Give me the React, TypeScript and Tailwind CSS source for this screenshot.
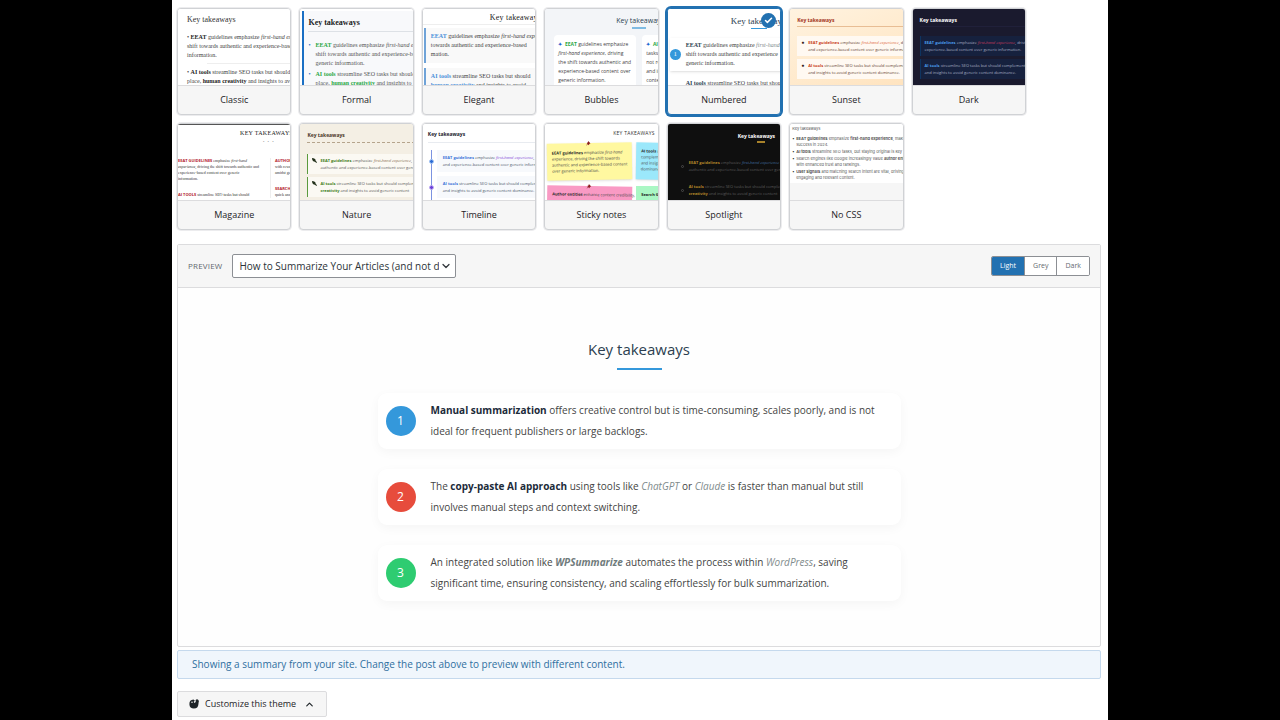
import { useState } from 'react';
import type { ReactNode } from 'react';
import { Check, ChevronDown, ChevronUp } from 'lucide-react';

type Theme = { name: string; thumb: ReactNode };

const serif = "font-['Liberation_Serif',serif]";

function Classic() {
  return (
    <div className={`${serif} h-full w-[180px] bg-white pt-1.5 pl-[9px] text-[6px] leading-[9px] text-[#444]`}>
      <div className="text-[8px] leading-[9px] text-[#333]">Key takeaways</div>
      <div className="mt-[9px]">
        • <b className="text-[#222]">EEAT</b> guidelines emphasize <i>first-hand experience</i>,
        <br />
        shift towards authentic and experience-based
        <br />
        information.
      </div>
      <div className="mt-[3px] ml-5 border-t border-[#eee] pt-[4px]">
        <div className="-ml-5">
          • <b className="text-[#222]">AI tools</b> streamline SEO tasks but should
          <br />
          place, <b className="text-[#222]">human creativity</b> and insights to avoid
        </div>
      </div>
    </div>
  );
}

function Formal() {
  return (
    <div className="h-full w-[180px] bg-white pt-0.5 pl-0.5">
      <div
        className={`${serif} h-full border-l-2 border-[#1a6fc4] bg-[#f8f9fb] pt-[7px] pl-1 text-[6px] leading-[9px] text-[#555]`}
      >
        <div className="border-b border-[#dde1e6] pb-[4px] text-[8px] leading-[9px] font-bold text-[#222]">
          Key takeaways
        </div>
        <div className="mt-[9px] flex gap-[5px]">
          <span className="text-[#1a6fc4]">•</span>
          <div>
            <b className="text-[#28a745]">EEAT</b> guidelines emphasize <i>first-hand experience</i>
            <br />
            shift towards authentic and experience-based
            <br />
            generic information.
          </div>
        </div>
        <div className="mt-[2px] flex gap-[5px]">
          <span className="text-[#1a6fc4]">•</span>
          <div>
            <b className="text-[#28a745]">AI tools</b> streamline SEO tasks but should
            <br />
            place, <b className="text-[#28a745]">human creativity</b> and insights to
          </div>
        </div>
      </div>
    </div>
  );
}

function Elegant() {
  return (
    <div className={`${serif} h-full w-[180px] bg-white pt-1 text-[6px] leading-[9px] text-[#444]`}>
      <div className="border-b border-[#eee] pb-[2px] pl-[67px] text-[8px] leading-[9px] tracking-wide text-[#222]">
        Key takeaways
      </div>
      <div className="mt-[3px] ml-[1px] border-l-2 border-[#6fa3d8] bg-[#f9f9f9] py-[4px] pl-[5px]">
        <b className="text-[#4a90d9]">EEAT</b> guidelines emphasize <i>first-hand experience</i>
        <br />
        towards authentic and experience-based
        <br />
        mation.
      </div>
      <div className="mt-[5px] ml-[1px] border-l-2 border-[#6fa3d8] bg-[#f9f9f9] py-[4px] pl-[5px]">
        <b className="text-[#4a90d9]">AI tools</b> streamline SEO tasks but should
        <br />
        <b className="text-[#4a90d9]">human creativity</b> and insights to avoid
      </div>
    </div>
  );
}

function Bubbles() {
  return (
    <div className="h-full w-[190px] bg-[#f3f5f8] pt-[7px] text-[5px] leading-[9px] text-[#444]">
      <div className="pl-[71px] text-[7px] leading-[9px] text-[#2c3e50]">Key takeaways</div>
      <div className="mt-[2px] ml-[87px] h-0.5 w-[14px] bg-[#7fbbe3]" />
      <div className="mt-[6px] ml-[9px] flex gap-[6px]">
        <div className="w-[82px] rounded-sm bg-white px-1 py-[5px]">
          <b className="text-[#1a5fd0]">✦</b>&nbsp; <b className="text-[#28a745]">EEAT</b> guidelines emphasize
          <br />
          <i>first-hand experience</i>, driving
          <br />
          the shift towards authentic and
          <br />
          experience-based content over
          <br />
          generic information.
        </div>
        <div className="w-[82px] rounded-sm bg-white px-1 py-[5px]">
          <b className="text-[#1a5fd0]">✦</b>&nbsp; <b className="text-[#28a745]">AI tools</b>
          <br />
          tasks but should
          <br />
          not replace
          <br />
          and insights
          <br />
          content
        </div>
      </div>
    </div>
  );
}

function Numbered() {
  return (
    <div className={`${serif} h-full w-[180px] bg-white pt-[7px] text-[6px] leading-[9px] text-[#444]`}>
      <div className="pl-[63px] text-[9px] leading-[10px] text-[#2c3e50]">Key takeaways</div>
      <div className="mt-[2px] ml-[83px] h-px w-4 bg-[#3498db]" />
      <div className="mt-[9px] ml-[2px] flex items-center gap-[5px] py-[3px] shadow-sm">
        <span className="size-[11px] rounded-full bg-[#3498db] text-center text-[6px] leading-[11px] text-white">
          1
        </span>
        <div>
          <b className="text-[#2c3e50]">EEAT</b> guidelines emphasize <i className="text-[#7f8c8d]">first-hand</i>
          <br />
          shift towards authentic and experience
          <br />
          generic information.
        </div>
      </div>
      <div className="mt-[8px] pl-[18px]">
        <b className="text-[#2c3e50]">AI tools</b> streamline SEO tasks but should
      </div>
    </div>
  );
}

function Sunset() {
  return (
    <div className="h-full w-[180px] bg-linear-to-br from-[#fff3e0] to-[#ffe0b8] pt-[7px] pl-[7px] text-[4px] leading-[7px] text-[#5d3a2e]">
      <div className="border-b border-[#e8bd94] pb-[2px] text-[5px] leading-[8px] font-bold text-[#a3341a]">
        Key takeaways
      </div>
      <div className="mt-[9px] flex gap-1 bg-[#fff9f2] px-1 py-[3px]">
        <span className="text-[5px] text-[#331a14]">●</span>
        <div>
          <b className="text-[#c8401a]">EEAT guidelines</b> emphasize{' '}
          <i className="text-[#e0693a]">first-hand experience</i>, driving
          <br />
          and experience-based content over generic information.
        </div>
      </div>
      <div className="mt-[3px] flex gap-1 bg-[#fff9f2] px-1 py-[3px]">
        <span className="text-[5px] text-[#331a14]">●</span>
        <div>
          <b className="text-[#c8401a]">AI tools</b> streamline SEO tasks but should complement
          <br />
          and insights to avoid generic content dominance.
        </div>
      </div>
    </div>
  );
}

function DarkThumb() {
  return (
    <div className="h-full w-[180px] bg-[#1a1a2e] pt-[7px] pl-[7px] text-[4px] leading-[7px] text-[#a9b0c4]">
      <div className="border-b border-[#20203a] pb-[2px] text-[5px] leading-[8px] font-bold text-white">
        Key takeaways
      </div>
      <div className="mt-[9px] border-l border-[#0f3460] bg-[#16213e] py-[3px] pl-1">
        <b className="text-[#4a9be8]">EEAT guidelines</b> emphasize{' '}
        <i className="text-[#c23a5c]">first-hand experience</i>, driving
        <br />
        experience-based content over generic information.
      </div>
      <div className="mt-[3px] border-l border-[#0f3460] bg-[#16213e] py-[3px] pl-1">
        <b className="text-[#4a9be8]">AI tools</b> streamline SEO tasks but should complement,
        <br />
        and insights to avoid generic content dominance.
      </div>
    </div>
  );
}

function Magazine() {
  return (
    <div
      className={`${serif} h-full w-[180px] border-t border-[#555] bg-white pt-1 text-[4px] leading-[6px] text-[#333]`}
    >
      <div className="pl-[62px] text-[6px] leading-[8px] tracking-wider text-[#222] uppercase">Key takeaways</div>
      <div className="mt-[2px] pl-[85px] text-[4px] tracking-widest text-[#999]">•&nbsp; •&nbsp; •</div>
      <div className="mt-[13px] flex gap-1">
        <div className="w-[93px] border-r border-[#eee]">
          <b className="font-['Open_Sans',sans-serif] text-[#b3202c]">EEAT GUIDELINES</b> emphasize <i>first-hand</i>
          <br />
          <i>experience</i>, driving the shift towards authentic and
          <br />
          experience-based content over generic
          <br />
          information.
          <div className="mt-[10px]">
            <b className="font-['Open_Sans',sans-serif] text-[#b3202c]">AI TOOLS</b> streamline SEO tasks but should
          </div>
        </div>
        <div>
          <b className="font-['Open_Sans',sans-serif] text-[#b3202c]">AUTHOR ENTITIES</b>
          <br />
          with rewards
          <br />
          amidst generic
          <div className="mt-[10px]">
            <b className="font-['Open_Sans',sans-serif] text-[#b3202c]">SEARCH GOOGLE</b>
            <br />
            quick answers
          </div>
        </div>
      </div>
    </div>
  );
}

function Leaf() {
  return (
    <svg viewBox="0 0 6 6" className="mt-px size-[5px] shrink-0" fill="#22301a">
      <path d="M0 0C2.4 0 4.6 1.2 4.4 3.4L6 5.2 5.2 6 3.6 4.6C1.4 4.6 0 2.4 0 0Z" />
    </svg>
  );
}

function Nature() {
  return (
    <div className="h-full w-[180px] bg-[#f4efe4] pt-[7px] pl-[7px] text-[4px] leading-[7px] text-[#555]">
      <div className="border-b border-dashed border-[#b5a48c] pb-[3px] text-[5px] leading-[8px] font-bold text-[#4a3728]">
        Key takeaways
      </div>
      <div className="mt-[11px] flex gap-[3px] border-l border-[#5a9a3c] bg-[#fbf9f3] py-[3px] pl-1">
        <Leaf />
        <div>
          <b className="text-[#3f7d20]">EEAT guidelines</b> emphasize{' '}
          <i className="text-[#8b7355]">first-hand experience</i>,
          <br />
          authentic and experience-based content over generic
        </div>
      </div>
      <div className="mt-[3px] flex gap-[3px] border-l border-[#5a9a3c] bg-[#fbf9f3] py-[3px] pl-1">
        <Leaf />
        <div>
          <b className="text-[#3f7d20]">AI tools</b> streamline SEO tasks but should complement
          <br />
          <b className="text-[#3f7d20]">creativity</b> and insights to avoid generic content
        </div>
      </div>
    </div>
  );
}

function TimelineDot({ className }: { className: string }) {
  return <span className={`-ml-[3px] size-[5px] shrink-0 rounded-full border ${className}`} />;
}

function Timeline() {
  return (
    <div className="h-full w-[180px] bg-white pt-[6px] pl-[5px] text-[4px] leading-[7px] text-[#4a5568]">
      <div className="border-b border-[#e8ebf0] pb-1 text-[5px] leading-[8px] font-bold text-[#1a202c]">
        Key takeaways
      </div>
      <div className="mt-[7px] ml-[3px] flex flex-col gap-1 border-l border-[#7c93e0] pb-4">
        <div className="flex items-center gap-[3px]">
          <TimelineDot className="border-[#a9c8f5] bg-[#2b6cd4]" />
          <div className="grow bg-[#f7f9fc] py-1 pl-[6px]">
            <b className="text-[#3b74d8]">EEAT guidelines</b> emphasize{' '}
            <i className="text-[#8a4fd8]">first-hand experience</i>, driving
            <br />
            and experience-based content over generic information.
          </div>
        </div>
        <div className="flex items-center gap-[3px]">
          <TimelineDot className="border-[#c3b0f5] bg-[#6a3fd8]" />
          <div className="grow bg-[#f7f9fc] py-1 pl-[6px]">
            <b className="text-[#3b74d8]">AI tools</b> streamline SEO tasks but should complement
            <br />
            and insights to avoid generic content dominance.
          </div>
        </div>
      </div>
    </div>
  );
}

function Pin() {
  return (
    <svg viewBox="0 0 6 6" className="absolute -top-0.5 left-[39px] size-[5px]">
      <path d="M3 0 6 3 4.6 3.4 3.6 5 2.4 3.8 0 6 2 3.4 1.2 2.4 2.8 1.6Z" fill="#8a1f1f" />
    </svg>
  );
}

function StickyNotes() {
  return (
    <div className="h-full w-[180px] bg-white pt-[5px] text-[4px] leading-[6px] text-[#444]">
      <div className="pl-[68px] text-[5px] leading-[8px] tracking-wider text-[#333] uppercase">Key takeaways</div>
      <div className="mt-[6px] ml-[2px] grid grid-cols-[85px_85px] gap-x-1 gap-y-[6px]">
        <div className="relative h-[37px] -rotate-1 bg-[#fff8a0] px-[5px] pt-[7px] shadow-sm">
          <Pin />
          <b className="text-[#222]">EEAT guidelines</b> emphasize <i>first-hand</i>
          <br />
          experience, driving the shift towards
          <br />
          authentic and experience-based content
          <br />
          over generic information.
        </div>
        <div className="h-[37px] rotate-1 bg-[#9be8fb] px-[5px] pt-[6px] shadow-sm">
          <b className="text-[#222]">AI tools</b> streamline
          <br />
          complement,
          <br />
          and insights
          <br />
          dominance.
        </div>
        <div className="relative h-[37px] rotate-1 bg-[#f99ac4] px-[5px] pt-[6px]">
          <Pin />
          <b className="text-[#222]">Author entities</b> enhance content credibility,
        </div>
        <div className="h-[37px] bg-[#aaf7c4] px-[5px] pt-[6px]">
          <b className="text-[#222]">Search Google</b>
        </div>
      </div>
    </div>
  );
}

function Spotlight() {
  return (
    <div className="h-full w-[180px] bg-[#0f0f0f] pt-[8px] text-[4px] leading-[7px] text-[#5c5c5c]">
      <div className="pl-[70px] text-[5px] leading-[8px] font-bold text-white">Key takeaways</div>
      <div className="mt-[1px] ml-[89px] h-0.5 w-2 bg-[#a8822a]" />
      <div className="mt-4 flex items-center gap-[5px] pl-[13px]">
        <span className="size-[3px] rounded-full border border-[#4a4a4a]" />
        <div>
          <b className="text-[#b3872a]">EEAT guidelines</b> emphasize{' '}
          <i className="text-[#3f6a9c]">first-hand experience</i>
          <br />
          authentic and experience-based content over generic
        </div>
      </div>
      <div className="mt-[10px] flex items-center gap-[5px] pl-[13px]">
        <span className="size-[3px] rounded-full border border-[#4a4a4a]" />
        <div>
          <b className="text-[#b3872a]">AI tools</b> streamline SEO tasks but should complement
          <br />
          <b className="text-[#b3872a]">creativity</b> and insights to avoid generic content
        </div>
      </div>
    </div>
  );
}

function NoCssItem({ children }: { children: ReactNode }) {
  return (
    <li className="flex gap-0.5">
      <span className="w-0.5 shrink-0 text-[#222]">•</span>
      <span>{children}</span>
    </li>
  );
}

function NoCss() {
  return (
    <div className="w-[180px] bg-white pt-px pb-[2px] pl-[2px] font-['Inter',sans-serif] text-[4px] leading-[6px] text-[#555]">
      <div className="leading-[7px]">Key takeaways</div>
      <ul className="mt-1 flex flex-col gap-px">
        <NoCssItem>
          <b>EEAT guidelines</b> emphasize <b>first-hand experience</b>, making
          <br />
          success in 2024.
        </NoCssItem>
        <NoCssItem>
          <b>AI tools</b> streamline SEO tasks, but staying original is key
        </NoCssItem>
        <NoCssItem>
          Search engines like Google increasingly value <b>author entities</b>
          <br />
          with enhanced trust and rankings.
        </NoCssItem>
        <NoCssItem>
          <b>User signals</b> and matching search intent are vital, driving
          <br />
          engaging and relevant content.
        </NoCssItem>
      </ul>
    </div>
  );
}

const themes: Theme[] = [
  { name: 'Classic', thumb: <Classic /> },
  { name: 'Formal', thumb: <Formal /> },
  { name: 'Elegant', thumb: <Elegant /> },
  { name: 'Bubbles', thumb: <Bubbles /> },
  { name: 'Numbered', thumb: <Numbered /> },
  { name: 'Sunset', thumb: <Sunset /> },
  { name: 'Dark', thumb: <DarkThumb /> },
  { name: 'Magazine', thumb: <Magazine /> },
  { name: 'Nature', thumb: <Nature /> },
  { name: 'Timeline', thumb: <Timeline /> },
  { name: 'Sticky notes', thumb: <StickyNotes /> },
  { name: 'Spotlight', thumb: <Spotlight /> },
  { name: 'No CSS', thumb: <NoCss /> },
];

const takeaways = [
  {
    color: 'bg-[#3498db]',
    text: (
      <>
        <b className="text-[#1c2b3a]">Manual summarization</b> offers creative control but is time-consuming, scales
        poorly, and is not ideal for frequent publishers or large backlogs.
      </>
    ),
  },
  {
    color: 'bg-[#e74c3c]',
    text: (
      <>
        The <b className="text-[#1c2b3a]">copy-paste AI approach</b> using tools like{' '}
        <i className="text-[#7f8c8d]">ChatGPT</i> or <i className="text-[#7f8c8d]">Claude</i> is faster than manual but
        still involves manual steps and context switching.
      </>
    ),
  },
  {
    color: 'bg-[#2ecc71]',
    text: (
      <>
        An integrated solution like <b className="text-[#6f7b7c] italic">WPSummarize</b> automates the process within{' '}
        <i className="text-[#7f8c8d]">WordPress</i>, saving significant time, ensuring consistency, and scaling
        effortlessly for bulk summarization.
      </>
    ),
  },
];

const modes = ['Light', 'Grey', 'Dark'];

function ThemeCard({ theme, selected, onSelect }: { theme: Theme; selected: boolean; onSelect: () => void }) {
  return (
    <button
      type="button"
      aria-pressed={selected}
      onClick={onSelect}
      className={`relative flex h-[107px] flex-col rounded-sm border bg-[#f6f6f6] text-left ${
        selected ? 'border-[#2271b1] ring-2 ring-[#2271b1]' : 'border-[#d0d2d5] ring-1 ring-[#ececee]'
      }`}
    >
      <div className="h-[76px] w-full overflow-hidden rounded-t-xs whitespace-nowrap">{theme.thumb}</div>
      <div className="flex w-full grow items-center justify-center border-t border-[#dcdcde] text-[9px] text-[#1d2327]">
        {theme.name}
      </div>
      {selected && (
        <span className="absolute top-1 right-1 flex size-[15px] items-center justify-center rounded-full bg-[#2271b1] text-white">
          <Check size={9} strokeWidth={4} />
        </span>
      )}
    </button>
  );
}

function CustomizeIcon() {
  return (
    <svg viewBox="0 0 20 20" className="size-[10px]" fill="#1d2327">
      <path d="M9 1.2A9 9 0 1 0 18.8 10.6L19.6 4 16.8 1.6 13.4 6.2 10.8 8 9.4 5.6 11.8 3.6Z" />
      <circle cx="16" cy="3.4" r="3" />
      <circle cx="6" cy="6.5" r="1.5" fill="#f6f6f6" />
    </svg>
  );
}

export default function App() {
  const [active, setActive] = useState('Numbered');
  const [mode, setMode] = useState('Light');

  return (
    <div className="min-h-screen bg-black font-['Open_Sans',sans-serif]">
      <main className="mx-auto min-h-screen w-full max-w-[936px] bg-white pt-2 pr-[7px] pb-[3px] pl-[5px]">
        <div className="grid max-w-[849px] grid-cols-7 gap-2">
          {themes.map((theme) => (
            <ThemeCard
              key={theme.name}
              theme={theme}
              selected={theme.name === active}
              onSelect={() => setActive(theme.name)}
            />
          ))}
        </div>

        <section className="mt-[14px] rounded-xs border border-[#dcdcde] bg-[#fefefe]">
          <div className="flex items-center border-b border-[#dcdcde] bg-[#f6f6f6] px-[10px] py-[9px]">
            <label htmlFor="post" className="text-[8px] tracking-wide text-[#646970] uppercase">
              Preview
            </label>
            <div className="relative ml-[10px] flex">
              <select
                id="post"
                className="h-6 w-56 appearance-none rounded-xs border border-[#8c8f94] bg-white pr-4 pl-[6px] text-[10px] text-[#2c3338]"
              >
                <option>How to Summarize Your Articles (and not do it manually)</option>
              </select>
              <ChevronDown
                size={12}
                strokeWidth={2.5}
                className="pointer-events-none absolute top-[6px] right-1 text-[#32373c]"
              />
            </div>
            <div className="ml-auto flex divide-x divide-[#8c8f94] overflow-hidden rounded-xs border border-[#8c8f94]">
              {modes.map((item) => (
                <button
                  key={item}
                  type="button"
                  aria-pressed={mode === item}
                  onClick={() => setMode(item)}
                  className={`h-[18px] px-2 text-[7px] ${
                    mode === item ? 'bg-[#2271b1] text-white' : 'bg-white text-[#646970]'
                  }`}
                >
                  {item}
                </button>
              ))}
            </div>
          </div>

          <div className="mx-auto max-w-[523px] pt-[49px] pb-[45px]">
            <h2 className="text-center text-[15px] leading-6 text-[#2c3e50]">Key takeaways</h2>
            <div className="mx-auto mt-[7px] h-0.5 w-[45px] bg-[#3498db]" />
            <ol className="mt-[23px] flex flex-col gap-5">
              {takeaways.map((item, i) => (
                <li
                  key={item.color}
                  className="flex items-center gap-[15px] rounded-[9px] bg-white py-[7px] pr-4 pl-2 shadow-[0_3px_11px_rgba(0,0,0,0.04)]"
                >
                  <span
                    className={`flex size-[30px] shrink-0 items-center justify-center rounded-full text-[12px] text-white ${item.color}`}
                  >
                    {i + 1}
                  </span>
                  <p className="text-[10px] leading-[21px] text-[#444]">{item.text}</p>
                </li>
              ))}
            </ol>
          </div>
        </section>

        <p className="mt-[3px] rounded-xs border border-[#c5d9ed] bg-[#f0f6fc] px-[14px] py-[5px] text-[10px] leading-[17px] text-[#2f6f9f]">
          Showing a summary from your site. Change the post above to preview with different content.
        </p>

        <button
          type="button"
          className="mt-3 flex h-[26px] items-center rounded-xs border border-[#dcdcde] bg-[#f6f6f6] px-[11px] text-[9px] text-[#1d2327]"
        >
          <CustomizeIcon />
          <span className="mr-2 ml-[6px]">Customize this theme</span>
          <ChevronUp size={11} strokeWidth={2.5} />
        </button>
      </main>
    </div>
  );
}
